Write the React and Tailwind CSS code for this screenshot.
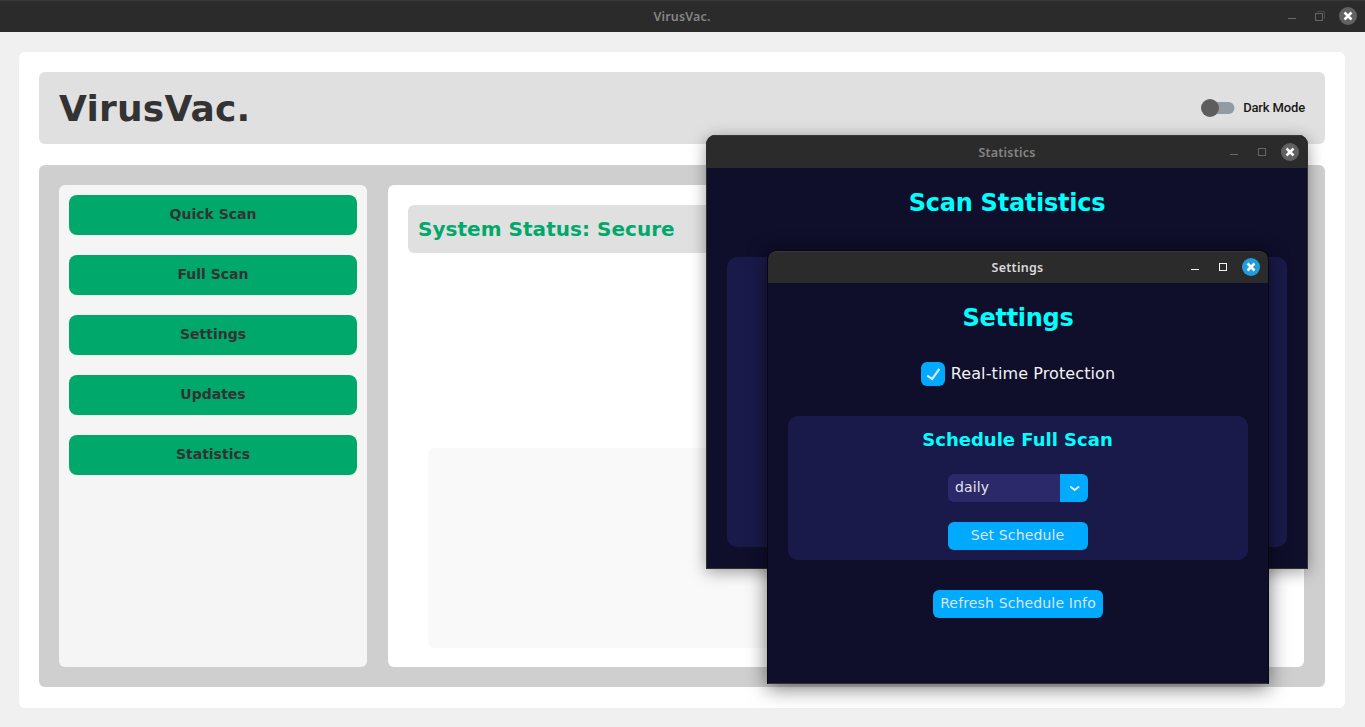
import React from "react";

const actions = ["Quick Scan", "Full Scan", "Settings", "Updates", "Statistics"];

function WindowControls({ active = false, maximized = false }) {
  const line = active ? "#f2f2f2" : "#666666";
  return (
    <svg width="72" height="18" viewBox="0 0 72 18" fill="none" className="block">
      <path d="M3 11.5h8" stroke={line} />
      {maximized ? (
        <>
          <path d="M32 4.5h7.5V12" stroke="#4a4a4a" />
          <rect x="30.5" y="6.5" width="7" height="7" stroke={line} />
        </>
      ) : (
        <rect x="31.5" y="5.5" width="7" height="7" stroke={line} />
      )}
      <circle cx="63" cy="9" r="9" fill={active ? "#1f9ede" : "#616161"} />
      <path d="M59.5 5.5l7 7M66.5 5.5l-7 7" stroke="#ffffff" strokeWidth="2.5" />
    </svg>
  );
}

function TitleBar({ title, active = false, maximized = false, className = "h-8 pb-px", textClass = "" }) {
  return (
    <div className={`grid shrink-0 grid-cols-[80px_1fr_80px] items-center border-t border-[#383838] bg-[#2b2b2b] ${className}`}>
      <span />
      <span
        className={`text-center font-['Noto_Sans',sans-serif] text-[12.5px] leading-4 font-semibold ${active ? "text-[#dadada]" : "text-[#858585]"} ${textClass}`}
      >
        {title}
      </span>
      <WindowControls active={active} maximized={maximized} />
    </div>
  );
}

function StatisticsWindow() {
  return (
    <section className="absolute top-[135px] left-[706px] flex h-[434px] w-[602px] flex-col overflow-hidden rounded-t-[9px] border border-t-0 border-[#303030] bg-[#0f0e2b] shadow-[0_3px_16px_rgba(0,0,0,0.38)]">
      <TitleBar title="Statistics" className="h-[33px]" textClass="pt-px tracking-[0.2px]" />
      <h2 className="mt-[21px] text-center text-2xl leading-7 font-bold tracking-[-0.25px] text-[#00ffff]">Scan Statistics</h2>
      <div className="mx-5 mt-10 h-[290px] shrink-0 rounded-[10px] bg-[#1a1a4a]" />
    </section>
  );
}

function SettingsWindow() {
  return (
    <section className="absolute top-[250px] left-[767px] flex h-[434px] w-[502px] flex-col items-center overflow-hidden rounded-t-[9px] border border-[#07070d] border-b-[#303030] bg-[#0f0e2b] shadow-[0_4px_20px_rgba(0,0,0,0.55)]">
      <TitleBar title="Settings" active className="h-8 w-full rounded-t-lg pb-px" textClass="pt-px pr-px tracking-[0.25px]" />
      <h2 className="mt-[21px] text-2xl leading-7 font-bold tracking-[-0.3px] text-[#00ffff]">Settings</h2>
      <label className="mt-[30px] flex h-6 items-center gap-1.5 text-base leading-6 tracking-[0.1px] text-[#f2f2f2]">
        <span className="flex size-6 items-center justify-center rounded-md bg-[#00aaff]">
          <svg width="24" height="24" viewBox="0 0 24 24" fill="none">
            <path d="M6.2 13.6l5 3.3 7.2-10" stroke="#dce4ee" strokeWidth="2.2" />
          </svg>
        </span>
        <span>Real-time Protection</span>
      </label>
      <div className="mt-[30px] flex h-36 w-[460px] shrink-0 flex-col items-center rounded-[10px] bg-[#1a1a4a] pt-3">
        <h3 className="pr-px text-lg leading-6 font-bold text-[#00ffff]">Schedule Full Scan</h3>
        <div className="mt-[22px] flex h-7 w-[140px] overflow-hidden rounded-md bg-[#2b2969]">
          <span className="flex-1 pl-[7px] text-[14px] leading-[26px] tracking-[0.15px] text-[#e2e6ef]">daily</span>
          <span className="flex w-7 items-center justify-center bg-[#00aaff]">
            <svg width="28" height="28" viewBox="0 0 28 28" fill="none">
              <path d="M10.9 13l3.8 2.9 3.8-2.9" stroke="#eaf5ff" strokeWidth="1.9" strokeLinecap="round" strokeLinejoin="round" />
            </svg>
          </span>
        </div>
        <button className="mt-5 h-7 w-[140px] rounded-md bg-[#00aaff] pr-[7px] pb-0.5 text-[14px] leading-[26px] tracking-[0.13px] text-[#dce4ee] pl-1.5">
          Set Schedule
        </button>
      </div>
      <button className="mt-[30px] h-7 w-[170px] rounded-md bg-[#00aaff] pb-0.5 text-[14px] leading-[26px] tracking-[0.15px] whitespace-nowrap text-[#dce4ee]">
        Refresh Schedule Info
      </button>
    </section>
  );
}

export default function App() {
  return (
    <div className="relative flex h-[727px] w-[1365px] flex-col overflow-hidden bg-[#f0f0f0] font-['DejaVu_Sans',sans-serif]">
      <TitleBar title="VirusVac." maximized textClass="pt-px pr-px tracking-[0.15px]" />
      <main className="mt-5 mr-5 ml-[19px] flex h-[656px] flex-col rounded-md bg-white p-5">
        <header className="flex h-[72px] items-center justify-between rounded-md bg-[#e0e0e0] px-5">
          <h1 className="pt-0.5 text-4xl leading-[42px] font-bold tracking-[0.2px] text-[#333333]">VirusVac.</h1>
          <label className="flex items-center gap-2">
            <svg width="34" height="18" viewBox="0 0 34 18">
              <rect x="3" y="3" width="30.5" height="12" rx="6" fill="#939ba2" />
              <circle cx="9" cy="9" r="9" fill="#5d5d5d" />
            </svg>
            <span className="font-[Roboto,sans-serif] text-[13px] leading-4 font-medium tracking-[-0.14px] text-[#1a1a1a]">Dark Mode</span>
          </label>
        </header>
        <div className="mt-[21px] flex h-[522px] gap-[21px] rounded-md bg-[#cfcfcf] p-5 pr-[21px]">
          <nav className="flex w-[308px] shrink-0 flex-col gap-5 rounded-md bg-[#f5f5f5] p-2.5">
            {actions.map((label) => (
              <button key={label} className="h-10 rounded-lg bg-[#00a86b] pb-0.5 text-sm font-bold text-[#333333]">
                {label}
              </button>
            ))}
          </nav>
          <div className="flex flex-1 flex-col rounded-md bg-white p-5">
            <div className="flex h-12 shrink-0 items-center rounded-md bg-[#e0e0e0] px-2.5 text-xl font-bold tracking-[0.04px] text-[#00a86b]">
              System Status: Secure
            </div>
            <div className="mx-5 mt-[195px] h-[200px] shrink-0 rounded-md bg-[#f9f9f9]" />
          </div>
        </div>
      </main>
      <StatisticsWindow />
      <SettingsWindow />
    </div>
  );
}
